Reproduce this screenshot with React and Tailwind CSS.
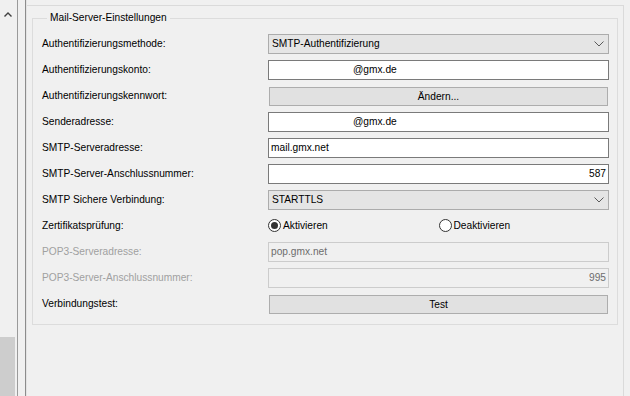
import React from "react";

const font = { fontFamily: '"Liberation Sans", Arial, sans-serif' };

function Chevron() {
  return (
    <svg width="10" height="6" viewBox="0 0 10 6" className="shrink-0">
      <path d="M0.5 0.5 L5 5 L9.5 0.5" fill="none" stroke="#5a5a5a" strokeWidth="1" />
    </svg>
  );
}

function Select({ value }) {
  return (
    <div className="h-[20px] border border-[#acacac] bg-[#e5e5e5] flex items-center justify-between pl-[3px] pr-[4px] text-black">
      <span>{value}</span>
      <Chevron />
    </div>
  );
}

function Input({ value, right, disabled, indent }) {
  return (
    <div
      className={
        "h-[20px] border flex items-center px-[2px] " +
        (disabled
          ? "border-[#cccccc] bg-[#f0f0f0] text-[#6d6d6d] "
          : "border-[#7a7a7a] bg-white text-black ") +
        (right ? "justify-end" : "justify-start")
      }
    >
      <span className={indent ? "pl-[82px]" : ""}>{value}</span>
    </div>
  );
}

function Button({ label }) {
  return (
    <div className="h-[19px] mt-[1px] mx-[1px] border border-[#adadad] bg-[#e1e1e1] flex items-center justify-center text-black">
      {label}
    </div>
  );
}

function Radio({ checked, label }) {
  return (
    <div className="flex items-center gap-[2px] text-black">
      <div className="w-[13px] h-[13px] rounded-full border border-[#333333] bg-white flex items-center justify-center">
        {checked && <div className="w-[7px] h-[7px] rounded-full bg-[#333333]" />}
      </div>
      <span>{label}</span>
    </div>
  );
}

function Label({ children, disabled }) {
  return (
    <div className={"h-[20px] flex items-center " + (disabled ? "text-[#a0a0a0]" : "text-black")}>
      {children}
    </div>
  );
}

export default function App() {
  return (
    <div className="w-[630px] h-[396px] flex bg-[#f0f0f0] overflow-hidden text-[10.2px]" style={font}>
      {/* left scrollbar strip */}
      <div className="w-[18px] h-full flex flex-col border-r border-[#9a9a9a]">
        <div className="h-[28px] w-[16px] flex items-center justify-center">
          <svg width="8" height="5" viewBox="0 0 8 5">
            <path d="M0.5 4.5 L4 1 L7.5 4.5" fill="none" stroke="#404040" strokeWidth="1.4" />
          </svg>
        </div>
        <div className="flex-1" />
        <div className="h-[59px] w-[15px] bg-[#cdcdcd]" />
      </div>
      <div className="w-[8px] h-full border-r border-[#8c8c8c]" />
      {/* main panel */}
      <div className="flex-1 h-full pt-[5px] border-l border-[#e3e3e3]">
        <div className="h-full mr-[6px] border-t border-r border-[#dadada] pl-[5px] pr-[5px]">
          <fieldset className="mt-[6px] border border-[#dcdcdc] pl-[9px] pr-[8px] pb-[10px]">
            <legend className="ml-[5px] px-[3px] text-black leading-[12px]">Mail-Server-Einstellungen</legend>
            <div className="grid grid-cols-[226px_1fr] gap-y-[6px] mt-[10px]">
              <Label>Authentifizierungsmethode:</Label>
              <Select value="SMTP-Authentifizierung" />
              <Label>Authentifizierungskonto:</Label>
              <Input value="@gmx.de" indent />
              <Label>Authentifizierungskennwort:</Label>
              <Button label="Ändern..." />
              <Label>Senderadresse:</Label>
              <Input value="@gmx.de" indent />
              <Label>SMTP-Serveradresse:</Label>
              <Input value="mail.gmx.net" />
              <Label>SMTP-Server-Anschlussnummer:</Label>
              <Input value="587" right />
              <Label>SMTP Sichere Verbindung:</Label>
              <Select value="STARTTLS" />
              <Label>Zertifikatsprüfung:</Label>
              <div className="h-[20px] grid grid-cols-2 items-center">
                <Radio checked label="Aktivieren" />
                <Radio label="Deaktivieren" />
              </div>
              <Label disabled>POP3-Serveradresse:</Label>
              <Input value="pop.gmx.net" disabled />
              <Label disabled>POP3-Server-Anschlussnummer:</Label>
              <Input value="995" right disabled />
              <Label>Verbindungstest:</Label>
              <Button label="Test" />
            </div>
          </fieldset>
        </div>
      </div>
    </div>
  );
}
